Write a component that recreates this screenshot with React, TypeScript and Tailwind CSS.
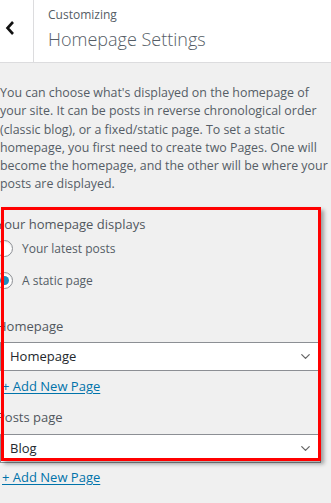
import { ChevronDown } from 'lucide-react';

const font = { fontFamily: '"Open Sans", "Noto Sans", sans-serif' };

const intro = [
  "You can choose what's displayed on the homepage of",
  'your site. It can be posts in reverse chronological order',
  '(classic blog), or a fixed/static page. To set a static',
  'homepage, you first need to create two Pages. One will',
  'become the homepage, and the other will be where your',
  'posts are displayed.',
];

function Radio({ checked, label }: { checked?: boolean; label: string }) {
  return (
    <label className="flex h-[32px] items-center gap-[9px]">
      <span className="-ml-[4px] flex h-[17px] w-[17px] shrink-0 items-center justify-center rounded-full border border-[#8c8f94] bg-white shadow-[inset_0_1px_2px_rgba(0,0,0,0.1)]">
        {checked && <span className="h-[9px] w-[9px] rounded-full bg-[#1e8cbe]" />}
      </span>
      <span className="text-[12px] text-[#555d66]">{label}</span>
    </label>
  );
}

function Select({ value }: { value: string }) {
  return (
    <div className="flex h-[29px] w-[321px] items-center justify-between border border-[#8c8f94] bg-white pl-[9px] pr-[7px]">
      <span className="text-[13px] text-[#23282d]">{value}</span>
      <ChevronDown className="h-[15px] w-[15px] text-[#666]" strokeWidth={2} />
    </div>
  );
}

function AddLink() {
  return (
    <a className="ml-[2px] block text-[13px] leading-[18px] text-[#0073aa] underline underline-offset-2">
      + Add New Page
    </a>
  );
}

export default function App() {
  return (
    <div className="relative h-[503px] w-[331px] overflow-hidden bg-[#f0f0f0]" style={font}>
      {/* header */}
      <div className="flex h-[63px] border-b border-[#dcdcde] bg-white">
        <div className="flex w-[34px] items-center border-r border-[#dcdcde] pb-[6px] pl-[5px]">
          <svg width="10" height="16" viewBox="0 0 10 16">
            <polyline points="8,2 2.5,8 8,14" fill="none" stroke="#111" strokeWidth="2.6" />
          </svg>
        </div>
        <div className="pl-[14px] pt-[6px]">
          <div className="text-[12px] leading-[18px] text-[#555d66]">Customizing</div>
          <div className="text-[18px] font-light leading-[30px] text-[#555d66]">Homepage Settings</div>
        </div>
      </div>

      <div className="w-[322px] pt-[21px]">
        <p className="text-[12.4px] leading-[18.3px] text-[#555d66]">
          {intro.map((line) => (
            <span key={line} className="block whitespace-nowrap">
              {line}
            </span>
          ))}
        </p>

        <div className="mt-[20px] -ml-[3px] text-[13px] font-medium leading-[20px] text-[#50575e]">
          Your homepage displays
        </div>
        <div className="-mt-[1px]">
          <Radio label="Your latest posts" />
          <Radio checked label="A static page" />
        </div>

        <div className="mt-[19px] -ml-[3px] text-[13px] font-medium leading-[20px] text-[#50575e]">
          Homepage
        </div>
        <div className="mt-[6px]">
          <Select value="Homepage" />
        </div>
        <div className="mt-[6px]">
          <AddLink />
        </div>

        <div className="mt-[12px] -ml-[3px] text-[13px] font-medium leading-[20px] text-[#50575e]">
          Posts page
        </div>
        <div className="mt-[7px]">
          <Select value="Blog" />
        </div>
        <div className="mt-[5px]">
          <AddLink />
        </div>
      </div>

      {/* annotation box */}
      <div className="pointer-events-none absolute left-[1px] top-[207px] h-[254px] w-[320px] border-[3px] border-[#ff0000] shadow-[3px_3px_4px_rgba(0,0,0,0.35)]" />
    </div>
  );
}
